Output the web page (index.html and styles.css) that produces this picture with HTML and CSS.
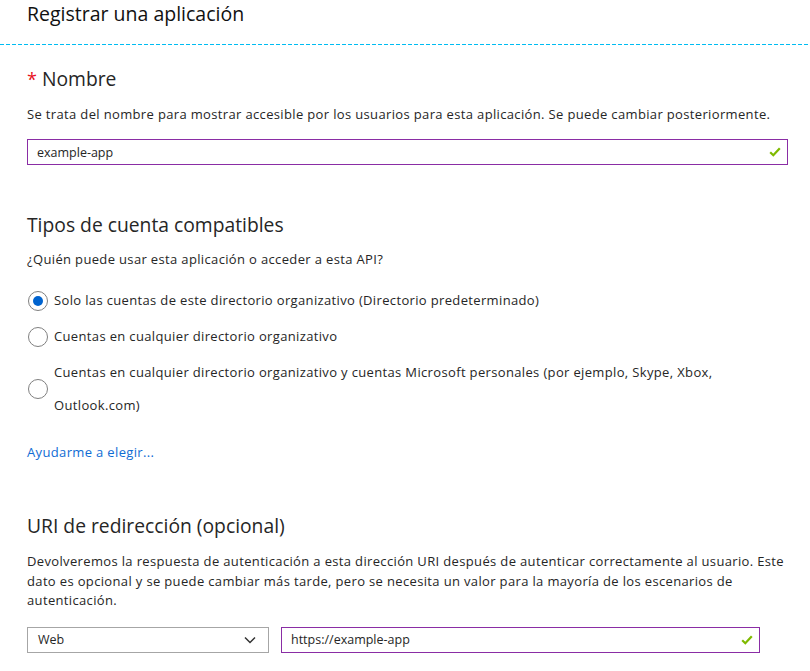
FILE: index.html
```html
<!DOCTYPE html>
<html lang="es">
<head>
<meta charset="utf-8">
<title>Registrar una aplicación</title>
<link rel="stylesheet" href="styles.css">
</head>
<body>
<header class="header">
  <h1 class="title">Registrar una aplicación</h1>
</header>
<div class="divider"></div>
<main class="content">
  <section class="section section-name">
    <h2 class="heading"><span class="required">*</span> Nombre</h2>
    <p class="desc">Se trata del nombre para mostrar accesible por los usuarios para esta aplicación. Se puede cambiar posteriormente.</p>
    <div class="field field-full">
      <span class="field-text">example-app</span>
      <svg class="check" width="12" height="10" viewBox="0 0 12 10"><path d="M1.2 5.2 L4.3 8.2 L10.8 1.2" fill="none" stroke="#7fba00" stroke-width="2.2"/></svg>
    </div>
  </section>

  <section class="section section-types">
    <h2 class="heading">Tipos de cuenta compatibles</h2>
    <p class="desc">¿Quién puede usar esta aplicación o acceder a esta API?</p>
    <div class="radios">
      <div class="radio-row">
        <span class="radio checked"></span>
        <span class="radio-label">Solo las cuentas de este directorio organizativo (Directorio predeterminado)</span>
      </div>
      <div class="radio-row">
        <span class="radio"></span>
        <span class="radio-label">Cuentas en cualquier directorio organizativo</span>
      </div>
      <div class="radio-row">
        <span class="radio"></span>
        <span class="radio-label">Cuentas en cualquier directorio organizativo y cuentas Microsoft personales (por ejemplo, Skype, Xbox, Outlook.com)</span>
      </div>
    </div>
    <a class="link" href="#">Ayudarme a elegir...</a>
  </section>

  <section class="section section-uri">
    <h2 class="heading">URI de redirección (opcional)</h2>
    <p class="desc desc-multi">Devolveremos la respuesta de autenticación a esta dirección URI después de autenticar correctamente al usuario. Este dato es opcional y se puede cambiar más tarde, pero se necesita un valor para la mayoría de los escenarios de autenticación.</p>
    <div class="uri-row">
      <div class="select">
        <span class="field-text">Web</span>
        <svg class="chevron" width="12" height="8" viewBox="0 0 12 8"><path d="M1 1.5 L6 6.5 L11 1.5" fill="none" stroke="#333" stroke-width="1.5"/></svg>
      </div>
      <div class="field field-uri">
        <span class="field-text">https://example-app</span>
        <svg class="check" width="12" height="10" viewBox="0 0 12 10"><path d="M1.2 5.2 L4.3 8.2 L10.8 1.2" fill="none" stroke="#7fba00" stroke-width="2.2"/></svg>
      </div>
    </div>
  </section>
</main>
</body>
</html>
```
FILE: styles.css
```css
html, body {
  margin: 0;
  padding: 0;
  background: #ffffff;
}
body {
  font-family: "Open Sans", "Noto Sans", sans-serif;
  color: #262626;
  width: 810px;
  height: 671px;
  overflow: hidden;
}
.header {
  height: 44px;
  padding-left: 27px;
  box-sizing: border-box;
}
.title {
  margin: 0;
  font-size: 19.5px;
  font-weight: 400;
  line-height: 28px;
  color: #111111;
}
.divider {
  height: 1px;
  background: repeating-linear-gradient(to right, #00bcf2 0 4px, transparent 4px 6px);
}
.content {
  padding-left: 27px;
  width: 761px;
}
.section {
  display: flex;
  flex-direction: column;
  align-items: flex-start;
}
.heading {
  margin: 0;
  font-size: 19.3px;
  font-weight: 400;
  line-height: 28px;
  color: #262626;
}
.required {
  color: #e81123;
  font-size: 18px;
}
.desc {
  margin: 0;
  font-size: 13px;
  letter-spacing: 0.35px;
  line-height: 20px;
}
.section-name {
  padding-top: 20px;
}
.section-name .desc {
  margin-top: 11px;
}
.field {
  box-sizing: border-box;
  height: 26px;
  border: 1px solid #8a2da5;
  display: flex;
  align-items: center;
  justify-content: space-between;
  padding: 0 6px 0 9px;
}
.field-full {
  width: 761px;
  margin-top: 15px;
}
.field-text {
  font-size: 12.5px;
  color: #262626;
}
.section-types {
  padding-top: 46px;
}
.section-types .desc {
  margin-top: 10px;
}
.radios {
  margin-top: 15px;
  display: flex;
  flex-direction: column;
  gap: 3px;
  width: 100%;
}
.radio-row {
  display: flex;
  align-items: center;
  gap: 6px;
  padding-left: 1px;
}
.radio {
  flex: none;
  box-sizing: border-box;
  width: 20px;
  height: 20px;
  border: 1px solid #808080;
  border-radius: 50%;
  display: flex;
  align-items: center;
  justify-content: center;
}
.radio.checked::after {
  content: "";
  width: 10px;
  height: 10px;
  border-radius: 50%;
  background: #0063cf;
}
.radio-label {
  font-size: 13px;
  letter-spacing: 0.35px;
  line-height: 33px;
}
.link {
  margin-top: 20px;
  font-size: 13px;
  letter-spacing: 0.35px;
  line-height: 20px;
  color: #0f6cd4;
  text-decoration: none;
}
.section-uri {
  padding-top: 50px;
}
.desc-multi {
  margin-top: 12px;
  line-height: 19.5px;
}
.uri-row {
  margin-top: 16px;
  display: flex;
  gap: 12px;
}
.select {
  box-sizing: border-box;
  width: 242px;
  height: 26px;
  border: 1px solid #a6a6a6;
  display: flex;
  align-items: center;
  justify-content: space-between;
  padding: 0 12px 0 10px;
}
.field-uri {
  width: 479px;
}
.check, .chevron {
  flex: none;
}
```
